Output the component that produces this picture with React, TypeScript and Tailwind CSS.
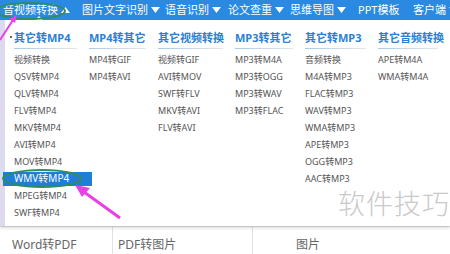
import { ReactNode } from "react";

const navItems = [
	{ label: "音视频转换", caret: "up", w: "w-[79px]" },
	{ label: "图片文字识别", caret: "down", w: "w-[83px]" },
	{ label: "语音识别", caret: "down", w: "w-[63px]" },
	{ label: "论文查重", caret: "down", w: "w-[62px]" },
	{ label: "思维导图", caret: "down", w: "w-[68px]" },
	{ label: "PPT模板", caret: "none", w: "w-[55px]" },
	{ label: "客户端", caret: "down", w: "w-[50px]" },
];

const columns = [
	{
		title: "其它转MP4",
		w: "w-[75px]",
		items: ["视频转换", "QSV转MP4", "QLV转MP4", "FLV转MP4", "MKV转MP4", "AVI转MP4", "MOV转MP4", "WMV转MP4", "MPEG转MP4", "SWF转MP4"],
	},
	{ title: "MP4转其它", w: "w-[69px]", items: ["MP4转GIF", "MP4转AVI"] },
	{ title: "其它视频转换", w: "w-[77px]", items: ["视频转GIF", "AVI转MOV", "SWF转FLV", "MKV转AVI", "FLV转AVI"] },
	{ title: "MP3转其它", w: "w-[70px]", items: ["MP3转M4A", "MP3转OGG", "MP3转WAV", "MP3转FLAC"] },
	{
		title: "其它转MP3",
		w: "w-[73px]",
		items: ["音频转换", "M4A转MP3", "FLAC转MP3", "WAV转MP3", "WMA转MP3", "APE转MP3", "OGG转MP3", "AAC转MP3"],
	},
	{ title: "其它音频转换", w: "w-[72px]", items: ["APE转M4A", "WMA转M4A"] },
];

function Caret({ dir }: { dir: string }) {
	if (dir === "none") return null;
	return (
		<svg width="9" height="6" viewBox="0 0 9 6" className="ml-[3px]">
			{dir === "up" ? <path d="M0 6 L4.5 0 L9 6 Z" fill="#fff" /> : <path d="M0 0 L4.5 6 L9 0 Z" fill="#fff" />}
		</svg>
	);
}

function Item({ children, active }: { children: ReactNode; active?: boolean }) {
	if (active) {
		return (
			<div className="relative -ml-[11px] mr-[-3px] h-[17px] flex items-center">
				<div className="h-[14px] w-full bg-[#1f7ed6] text-white flex items-center pl-[11px] text-[10px]">{children}</div>
				<div className="absolute left-[-1px] top-[-1px] w-[80px] h-[19px] rounded-[50%] border-2 border-[#2f8c5c]" />
			</div>
		);
	}
	return <div className="h-[17px] flex items-center">{children}</div>;
}

export default function App() {
	return (
		<div
			className="w-[450px] h-[254px] relative overflow-hidden bg-white"
			style={{ fontFamily: '"Noto Sans", "Noto Sans CJK SC", sans-serif' }}
		>
			{/* top navigation */}
			<div className="h-[20px] bg-[#2a8ae2] flex items-center pl-[3px] text-white text-[11px] whitespace-nowrap">
				{navItems.map((n) => (
					<div key={n.label} className={`${n.w} flex items-center shrink-0`}>
						<span>{n.label}</span>
						<Caret dir={n.caret} />
					</div>
				))}
			</div>

			{/* dropdown */}
			<div className="h-[206px] flex bg-white shadow-[0_2px_3px_rgba(0,0,0,0.15)] relative">
				<div className="w-[5px] bg-[#ddd9ef]" />
				<div className="flex pl-[9px] pt-[10px]">
					{columns.map((c) => (
						<div key={c.title} className={`${c.w} shrink-0`}>
							<div className="text-[11px] font-bold text-[#2b80d6] leading-[15px] whitespace-nowrap">{c.title}</div>
							<div className="mt-[3px] mb-[2px] mr-[12px] h-[1px] bg-gradient-to-r from-[#a9c9ea] to-[#e6e6e6]" />
							<div className="text-[9px] text-[#555] whitespace-nowrap">
								{c.items.map((it) => (
									<Item key={it} active={it === "WMV转MP4"}>
										{it}
									</Item>
								))}
							</div>
						</div>
					))}
				</div>
				<div className="absolute left-[34px] top-[-4px] w-0 h-0 border-x-[5px] border-x-transparent border-b-[5px] border-b-white" />
			</div>

			{/* page tabs under the menu */}
			<div className="h-[28px] flex border-t border-[#e2e2e2] text-[12px] text-[#666] whitespace-nowrap">
				<div className="w-[112px] pl-[12px] pt-[9px]">Word转PDF</div>
				<div className="w-[140px] pl-[5px] pt-[9px] border-l border-[#e2e2e2]">PDF转图片</div>
				<div className="flex-1 pl-[43px] pt-[9px] border-l border-[#e2e2e2]">图片</div>
			</div>

			{/* watermark */}
			<div className="absolute left-[338px] top-[184px] text-[27px] leading-[40px] tracking-[1px] text-[#c9c9c9] font-light whitespace-nowrap">
				软件技巧
			</div>

			{/* annotations */}
			<div className="absolute left-[-6px] top-[2px] w-[72px] h-[18px] rounded-[50%] border-2 border-[#2f8c5c]" />
			<svg className="absolute left-0 top-0" width="450" height="254" viewBox="0 0 450 254">
				<line x1="0" y1="40" x2="13" y2="20" stroke="#e83fe6" strokeWidth="2" />
				<path d="M17 15 L9 19 L15 23 Z" fill="#e83fe6" />
				<circle cx="11" cy="37" r="1" fill="#333" />
				<line x1="120" y1="218" x2="84" y2="192" stroke="#e83fe6" strokeWidth="3" />
				<path d="M75 185 L90 188 L82 197 Z" fill="#e83fe6" />
			</svg>
		</div>
	);
}
